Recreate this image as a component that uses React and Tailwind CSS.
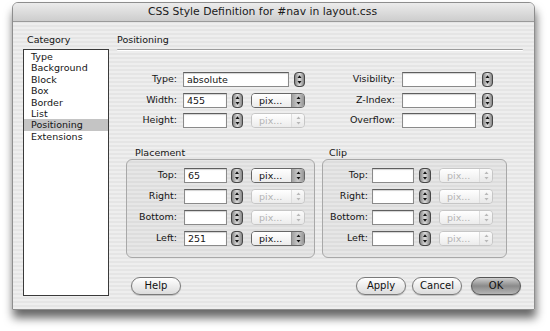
import React from "react";

const categories = [
  "Type",
  "Background",
  "Block",
  "Box",
  "Border",
  "List",
  "Positioning",
  "Extensions",
];

function Spinner({ w = 11 }) {
  return (
    <svg width={w} height="15" viewBox={`0 0 ${w} 15`} className="shrink-0">
      <defs>
        <linearGradient id="spin" x1="0" y1="0" x2="1" y2="0">
          <stop offset="0" stopColor="#7e7e7e" />
          <stop offset="0.5" stopColor="#dcdcdc" />
          <stop offset="1" stopColor="#7e7e7e" />
        </linearGradient>
      </defs>
      <rect
        x="0.5"
        y="0.5"
        width={w - 1}
        height="14"
        rx="3.5"
        fill="url(#spin)"
        stroke="#474747"
      />
      <path d={`M${w / 2} 3.2 L${w / 2 + 2} 6 H${w / 2 - 2} Z`} fill="#111" />
      <path d={`M${w / 2} 11.8 L${w / 2 + 2} 9 H${w / 2 - 2} Z`} fill="#111" />
    </svg>
  );
}

function TextBox({ w, value }) {
  return (
    <div
      className="h-[15px] shrink-0 border border-[#8a8a8a] border-t-[#5e5e5e] bg-white pl-[3px] leading-[13px] shadow-[inset_0_1px_1px_rgba(0,0,0,0.18)]"
      style={{ width: w }}
    >
      {value}
    </div>
  );
}

function Unit({ disabled }) {
  return (
    <div
      className={
        disabled
          ? "flex h-[15px] w-[54px] shrink-0 overflow-hidden rounded-[4px] border border-[#c6c6c6] text-[#b4b4b4]"
          : "flex h-[15px] w-[54px] shrink-0 overflow-hidden rounded-[4px] border border-[#666666] text-[#111]"
      }
    >
      <div className="flex-1 bg-gradient-to-b from-white to-[#ececec] pl-[7px] leading-[13px]">
        pix...
      </div>
      <div
        className={
          disabled
            ? "flex w-[13px] items-center justify-center border-l border-[#dddddd] bg-gradient-to-b from-[#fafafa] to-[#e8e8e8]"
            : "flex w-[13px] items-center justify-center border-l border-[#8a8a8a] bg-gradient-to-r from-[#a0a0a0] via-[#cacaca] to-[#959595]"
        }
      >
        <svg width="7" height="11" viewBox="0 0 7 11">
          <path d="M3.5 1.5 L5.5 4 H1.5 Z" fill={disabled ? "#b8b8b8" : "#111"} />
          <path d="M3.5 9.5 L5.5 7 H1.5 Z" fill={disabled ? "#b8b8b8" : "#111"} />
        </svg>
      </div>
    </div>
  );
}

function AquaButton({ children, primary }) {
  return (
    <button
      className={
        primary
          ? "h-[18px] w-[50px] rounded-full border border-[#555555] bg-gradient-to-b from-[#cfcfcf] via-[#8a8a8a] to-[#b5b5b5] text-[10px] leading-[16px] text-[#111] shadow-[0_1px_1px_rgba(0,0,0,0.25)]"
          : "h-[18px] w-[50px] rounded-full border border-[#7a7a7a] bg-gradient-to-b from-white via-[#ededed] to-[#dcdcdc] text-[10px] leading-[16px] text-[#111] shadow-[0_1px_1px_rgba(0,0,0,0.2)]"
      }
    >
      {children}
    </button>
  );
}

export default function App() {
  return (
    <div className="h-[331px] w-[550px] overflow-hidden bg-white pl-[12px] pt-[2px] font-['DejaVu_Sans',sans-serif] text-[9.5px] text-[#151515]">
      <div className="flex h-[308px] w-[523px] flex-col rounded-t-[6px] border border-[#8e8e8e] bg-[image:repeating-linear-gradient(180deg,#eeeeee_0px,#eeeeee_2px,#e5e5e5_2px,#e5e5e5_4px)] shadow-[1px_8px_10px_rgba(0,0,0,0.6)]">
        {/* title bar */}
        <div className="flex h-[19px] shrink-0 items-center justify-center rounded-t-[5px] border-b border-[#9a9a9a] bg-gradient-to-b from-[#ececec] to-[#cdcdcd] pr-[22px] text-[10.8px] text-[#1a1a1a]">
          CSS Style Definition for #nav in layout.css
        </div>

        <div className="flex flex-1 pl-[10px] pr-[11px] pt-[12px]">
          {/* category list */}
          <div className="flex w-[86px] shrink-0 flex-col">
            <div className="h-[12px] pl-[4px] leading-[12px]">Category</div>
            <div className="mt-[3px] h-[247px] border border-[#3a3a3a] bg-white pt-[1px]">
              {categories.map((c) => (
                <div
                  key={c}
                  className={
                    c === "Positioning"
                      ? "h-[11.4px] bg-[#c4c4c4] pl-[7px] leading-[11.4px]"
                      : "h-[11.4px] pl-[7px] leading-[11.4px]"
                  }
                >
                  {c}
                </div>
              ))}
            </div>
          </div>

          {/* panel */}
          <div className="ml-[8px] flex flex-1 flex-col">
            <div className="h-[12px] leading-[12px]">Positioning</div>
            <div className="mt-[3px] h-[2px] rounded-full border-t border-b border-t-[#9c9c9c] border-b-white" />

            <div className="mt-[21px] flex">
              <div className="flex w-[188px] flex-col gap-[5.5px]">
                <div className="flex h-[15px] items-center">
                  <div className="w-[60px] text-right">Type:</div>
                  <div className="ml-[6px]">
                    <TextBox w={106} value="absolute" />
                  </div>
                  <div className="ml-[5px]">
                    <Spinner />
                  </div>
                </div>
                <div className="flex h-[15px] items-center">
                  <div className="w-[60px] text-right">Width:</div>
                  <div className="ml-[6px]">
                    <TextBox w={44} value="455" />
                  </div>
                  <div className="ml-[5px]">
                    <Spinner />
                  </div>
                  <div className="ml-[8px]">
                    <Unit />
                  </div>
                </div>
                <div className="flex h-[15px] items-center">
                  <div className="w-[60px] text-right">Height:</div>
                  <div className="ml-[6px]">
                    <TextBox w={44} value="" />
                  </div>
                  <div className="ml-[5px]">
                    <Spinner />
                  </div>
                  <div className="ml-[8px]">
                    <Unit disabled />
                  </div>
                </div>
              </div>

              <div className="flex flex-col gap-[5.5px]">
                {["Visibility:", "Z-Index:", "Overflow:"].map((l) => (
                  <div key={l} className="flex h-[15px] items-center">
                    <div className="w-[90px] text-right">{l}</div>
                    <div className="ml-[7px]">
                      <TextBox w={74} value="" />
                    </div>
                    <div className="ml-[6px]">
                      <Spinner />
                    </div>
                  </div>
                ))}
              </div>
            </div>

            <div className="mt-[19px] flex">
              {/* placement */}
              <div className="ml-[9px] flex w-[189px] flex-col">
                <div className="h-[12px] pl-[9px] leading-[12px]">Placement</div>
                <div className="flex h-[99px] flex-col gap-[6px] rounded-[6px] border border-[#a8a8a8] bg-[rgba(0,0,0,0.03)] pt-[8px]">
                  {[
                    ["Top:", "65", false],
                    ["Right:", "", true],
                    ["Bottom:", "", true],
                    ["Left:", "251", false],
                  ].map(([l, v, d]) => (
                    <div key={l} className="flex h-[15px] items-center">
                      <div className="w-[50px] text-right">{l}</div>
                      <div className="ml-[7px]">
                        <TextBox w={43} value={v} />
                      </div>
                      <div className="ml-[4px]">
                        <Spinner w={12} />
                      </div>
                      <div className="ml-[8px]">
                        <Unit disabled={d} />
                      </div>
                    </div>
                  ))}
                </div>
              </div>

              {/* clip */}
              <div className="ml-[7px] flex w-[185px] flex-col">
                <div className="h-[12px] pl-[7px] leading-[12px]">Clip</div>
                <div className="flex h-[99px] flex-col gap-[6px] rounded-[6px] border border-[#a8a8a8] bg-[rgba(0,0,0,0.03)] pt-[8px]">
                  {["Top:", "Right:", "Bottom:", "Left:"].map((l) => (
                    <div key={l} className="flex h-[15px] items-center">
                      <div className="w-[45px] text-right">{l}</div>
                      <div className="ml-[4px]">
                        <TextBox w={42} value="" />
                      </div>
                      <div className="ml-[5px]">
                        <Spinner w={12} />
                      </div>
                      <div className="ml-[8px]">
                        <Unit disabled />
                      </div>
                    </div>
                  ))}
                </div>
              </div>
            </div>

            <div className="mt-[19px] flex items-center pr-[2px]">
              <div className="ml-[14px]">
                <AquaButton>Help</AquaButton>
              </div>
              <div className="flex-1" />
              <AquaButton>Apply</AquaButton>
              <div className="ml-[6px]">
                <AquaButton>Cancel</AquaButton>
              </div>
              <div className="ml-[9px]">
                <AquaButton primary>OK</AquaButton>
              </div>
            </div>
          </div>
        </div>
      </div>
    </div>
  );
}
